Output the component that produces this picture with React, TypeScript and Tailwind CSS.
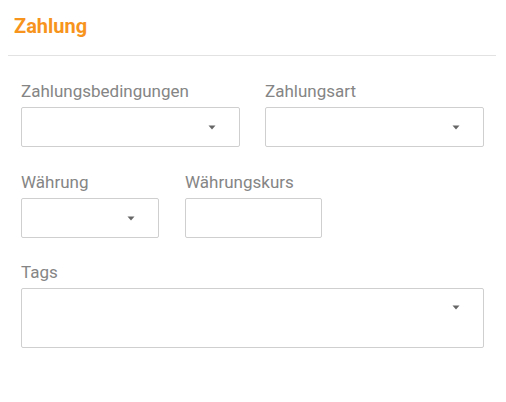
const font = { fontFamily: 'Roboto, "Liberation Sans", sans-serif' };

function Caret() {
  return (
    <svg width="8" height="5" viewBox="0 0 8 5" className="shrink-0">
      <path d="M0.5 0.5 H7.5 L4 4.5 Z" fill="#666" />
    </svg>
  );
}

function SelectBox({ tall = false }: { tall?: boolean }) {
  return (
    <div
      className={`flex ${tall ? 'h-[60px] items-start pt-[16px]' : 'h-[40px] items-center'} justify-end rounded-[2px] border border-[#cfcfcf] bg-white pr-[23px]`}
    >
      <Caret />
    </div>
  );
}

function Field({ label, children }: { label: string; children: React.ReactNode }) {
  return (
    <div className="flex flex-col">
      <label className="mb-[6px] text-[17px] leading-[20px] text-[#858585]">{label}</label>
      {children}
    </div>
  );
}

export default function App() {
  return (
    <div className="h-[402px] w-[506px] bg-white" style={font}>
      <div className="pl-[8px] pr-[10px]">
        <h2 className="pl-[6px] pt-[14px] text-[20px] font-bold leading-[24px] text-[#f7941d]">Zahlung</h2>
        <div className="mt-[17px] h-px bg-[#e2e2e2]" />
      </div>
      <div className="flex flex-col pl-[21px] pr-[22px] pt-[25px]">
        <div className="grid grid-cols-2 gap-[25px]">
          <Field label="Zahlungsbedingungen">
            <SelectBox />
          </Field>
          <Field label="Zahlungsart">
            <SelectBox />
          </Field>
        </div>
        <div className="mt-[25px] flex gap-[26px]">
          <div className="w-[138px]">
            <Field label="Währung">
              <SelectBox />
            </Field>
          </div>
          <div className="w-[137px]">
            <Field label="Währungskurs">
              <div className="h-[40px] rounded-[2px] border border-[#cfcfcf] bg-white" />
            </Field>
          </div>
        </div>
        <div className="mt-[24px]">
          <Field label="Tags">
            <SelectBox tall />
          </Field>
        </div>
      </div>
    </div>
  );
}
